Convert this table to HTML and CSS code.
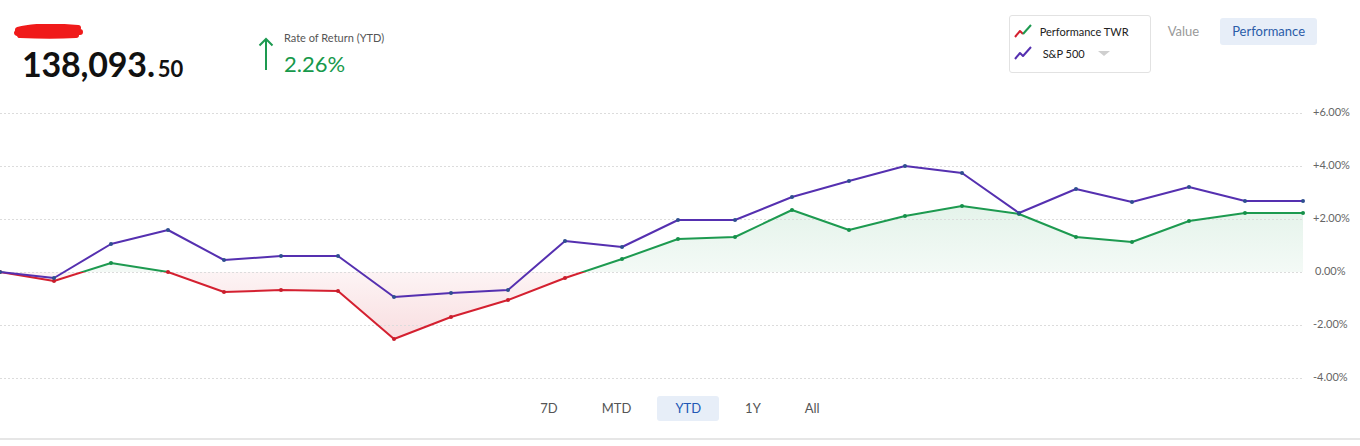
FILE: index.html
```html
<!DOCTYPE html>
<html>
<head>
<meta charset="utf-8">
<link rel="stylesheet" href="styles.css">
</head>
<body>
<div class="page">
  <div class="header">
    <div class="balance">
      <svg class="scribble" width="70" height="15" viewBox="0 0 70 15">
        <path d="M4,6 C18,2 42,2 64,4 M3,9 C20,7 46,8 66,8 M6,11 C26,12 46,12 62,11" fill="none" stroke="#f01a1a" stroke-width="6" stroke-linecap="round"/>
      </svg>
      <div class="amount"><span class="big">138,093.</span><span class="cents">50</span></div>
    </div>
    <div class="ror">
      <svg class="arrow" width="16" height="34" viewBox="0 0 16 34">
        <path d="M8,33 L8,2 M1.5,8.5 L8,2 L14.5,8.5" fill="none" stroke="#1d9a50" stroke-width="2"/>
      </svg>
      <div class="ror-text">
        <div class="ror-label">Rate of Return (YTD)</div>
        <div class="ror-value">2.26%</div>
      </div>
    </div>
    <div class="right">
      <div class="legend">
        <div class="legend-row">
          <svg class="legend-icon" width="18" height="14" viewBox="0 0 18 14">
            <polyline points="1,13 6,7 9,10" fill="none" stroke="#d42030" stroke-width="2" stroke-linejoin="round"/>
            <polyline points="9,10 17,1" fill="none" stroke="#1d9a50" stroke-width="2"/>
          </svg>
          <span class="legend-text">Performance TWR</span>
        </div>
        <div class="legend-row">
          <svg class="legend-icon" width="18" height="14" viewBox="0 0 18 14">
            <polyline points="1,13 6,7 9,10 17,1" fill="none" stroke="#5530b0" stroke-width="2" stroke-linejoin="round"/>
          </svg>
          <span class="legend-text sp">S&amp;P 500</span>
          <span class="caret"></span>
        </div>
      </div>
      <div class="toggle">
        <span class="tbtn">Value</span>
        <span class="tbtn active">Performance</span>
      </div>
    </div>
  </div>

  <svg class="chart" width="1360" height="295" viewBox="0 0 1360 295">
    <defs>
      <clipPath id="above"><rect x="0" y="0" width="1360" height="177"/></clipPath>
      <clipPath id="below"><rect x="0" y="177" width="1360" height="118"/></clipPath>
      <linearGradient id="gfill" gradientUnits="userSpaceOnUse" x1="0" y1="110" x2="0" y2="177">
        <stop offset="0" stop-color="#1d9a50" stop-opacity="0.12"/>
        <stop offset="1" stop-color="#1d9a50" stop-opacity="0.05"/>
      </linearGradient>
      <linearGradient id="rfill" gradientUnits="userSpaceOnUse" x1="0" y1="244" x2="0" y2="177">
        <stop offset="0" stop-color="#d42030" stop-opacity="0.15"/>
        <stop offset="1" stop-color="#d42030" stop-opacity="0.05"/>
      </linearGradient>
    </defs>

    <polygon clip-path="url(#above)" fill="url(#gfill)" points="0,177 54,186 111,168 168,177 224,197 281,195 338,196 394,244 451,222 508,205 565,183 622,164 678,144 735,142 792,115 849,135 905,121 962,111 1019,119 1076,142 1132,147 1189,126 1245,118 1303,118 1303,177"/>
    <polygon clip-path="url(#below)" fill="url(#rfill)" points="0,177 54,186 111,168 168,177 224,197 281,195 338,196 394,244 451,222 508,205 565,183 622,164 678,144 735,142 792,115 849,135 905,121 962,111 1019,119 1076,142 1132,147 1189,126 1245,118 1303,118 1303,177"/>

    <g class="grid">
      <line x1="0" y1="18.5" x2="1303" y2="18.5"/>
      <line x1="0" y1="71.5" x2="1303" y2="71.5"/>
      <line x1="0" y1="124.5" x2="1303" y2="124.5"/>
      <line x1="0" y1="177.5" x2="1303" y2="177.5"/>
      <line x1="0" y1="230.5" x2="1303" y2="230.5"/>
      <line x1="0" y1="283.5" x2="1303" y2="283.5"/>
    </g>

    <g class="axis">
      <text x="1313" y="18">+6.00%</text>
      <text x="1313" y="71">+4.00%</text>
      <text x="1313" y="124">+2.00%</text>
      <text x="1315" y="177">0.00%</text>
      <text x="1313" y="230">-2.00%</text>
      <text x="1313" y="283">-4.00%</text>
    </g>

    <polyline class="twr-g" clip-path="url(#above)" points="0,177 54,186 111,168 168,177 224,197 281,195 338,196 394,244 451,222 508,205 565,183 622,164 678,144 735,142 792,115 849,135 905,121 962,111 1019,119 1076,142 1132,147 1189,126 1245,118 1303,118"/>
    <polyline class="twr-r" clip-path="url(#below)" points="0,177 54,186 111,168 168,177 224,197 281,195 338,196 394,244 451,222 508,205 565,183 622,164 678,144 735,142 792,115 849,135 905,121 962,111 1019,119 1076,142 1132,147 1189,126 1245,118 1303,118"/>

    <g class="dots-r">
      <circle cx="0" cy="177" r="2"/><circle cx="54" cy="186" r="2"/><circle cx="168" cy="177" r="2"/>
      <circle cx="224" cy="197" r="2"/><circle cx="281" cy="195" r="2"/><circle cx="338" cy="196" r="2"/>
      <circle cx="394" cy="244" r="2"/><circle cx="451" cy="222" r="2"/><circle cx="508" cy="205" r="2"/>
      <circle cx="565" cy="183" r="2"/>
    </g>
    <g class="dots-g">
      <circle cx="111" cy="168" r="2"/><circle cx="622" cy="164" r="2"/><circle cx="678" cy="144" r="2"/>
      <circle cx="735" cy="142" r="2"/><circle cx="792" cy="115" r="2"/><circle cx="849" cy="135" r="2"/>
      <circle cx="905" cy="121" r="2"/><circle cx="962" cy="111" r="2"/><circle cx="1019" cy="119" r="2"/>
      <circle cx="1076" cy="142" r="2"/><circle cx="1132" cy="147" r="2"/><circle cx="1189" cy="126" r="2"/>
      <circle cx="1245" cy="118" r="2"/><circle cx="1303" cy="118" r="2"/>
    </g>

    <polyline class="sp-line" points="0,177 54,183 111,149 168,135 224,165 281,161 338,161 394,202 451,198 508,195 565,146 622,152 678,125 735,125 792,102 849,86 905,71 962,78 1019,118 1076,94 1132,107 1189,92 1245,106 1303,106"/>
    <g class="dots-p">
      <circle cx="0" cy="177" r="2"/><circle cx="54" cy="183" r="2"/><circle cx="111" cy="149" r="2"/>
      <circle cx="168" cy="135" r="2"/><circle cx="224" cy="165" r="2"/><circle cx="281" cy="161" r="2"/>
      <circle cx="338" cy="161" r="2"/><circle cx="394" cy="202" r="2"/><circle cx="451" cy="198" r="2"/>
      <circle cx="508" cy="195" r="2"/><circle cx="565" cy="146" r="2"/><circle cx="622" cy="152" r="2"/>
      <circle cx="678" cy="125" r="2"/><circle cx="735" cy="125" r="2"/><circle cx="792" cy="102" r="2"/>
      <circle cx="849" cy="86" r="2"/><circle cx="905" cy="71" r="2"/><circle cx="962" cy="78" r="2"/>
      <circle cx="1019" cy="118" r="2"/><circle cx="1076" cy="94" r="2"/><circle cx="1132" cy="107" r="2"/>
      <circle cx="1189" cy="92" r="2"/><circle cx="1245" cy="106" r="2"/><circle cx="1303" cy="106" r="2"/>
    </g>
  </svg>

  <div class="ranges">
    <span class="rbtn">7D</span>
    <span class="rbtn">MTD</span>
    <span class="rbtn active">YTD</span>
    <span class="rbtn">1Y</span>
    <span class="rbtn">All</span>
  </div>
  <div class="rule"></div>
</div>
</body>
</html>
```

FILE: styles.css
```css
* { box-sizing: border-box; }
html, body { margin: 0; padding: 0; background: #fff; }
body { font-family: Lato, "Open Sans", sans-serif; color: #333; }
.page { width: 1360px; height: 446px; overflow: hidden; }

.header { display: flex; align-items: flex-start; height: 95px; }

.balance { width: 258px; padding: 24px 0 0 14px; }
.scribble { display: block; }
.amount { margin: 8px 0 0 8px; line-height: 33px; color: #111; white-space: nowrap; }
.big { font-size: 34px; font-weight: 700; letter-spacing: -0.2px; }
.cents { font-size: 22px; font-weight: 700; margin-left: 3px; }

.ror { display: flex; align-items: flex-start; padding-top: 37px; }
.arrow { display: block; }
.ror-text { margin-left: 10px; margin-top: -6px; }
.ror-label { font-size: 11px; line-height: 14px; color: #555; }
.ror-value { font-size: 22px; line-height: 26px; margin-top: 6px; color: #17994b; font-weight: 400; }

.right { margin-left: auto; display: flex; align-items: flex-start; padding-top: 15px; padding-right: 43px; }
.legend { width: 142px; height: 58px; border: 1px solid #e2e2e2; border-radius: 3px; padding: 4px 4px; }
.legend-row { display: flex; align-items: center; height: 22px; }
.legend-icon { display: block; flex: none; }
.legend-text { font-size: 11px; color: #222; margin-left: 8px; }
.legend-text.sp { margin-left: 11px; }
.caret { width: 0; height: 0; border-left: 6px solid transparent; border-right: 6px solid transparent; border-top: 5px solid #cfcfcf; margin-left: 13px; margin-top: 1px; }

.toggle { display: flex; gap: 9px; margin-left: 5px; margin-top: 3px; }
.tbtn { font-size: 13px; line-height: 27px; height: 27px; padding: 0 12px; color: #999; border-radius: 3px; }
.tbtn.active { background: #e7eef8; color: #2b5ca8; }

.chart { display: block; }
.grid line { stroke: #dcdcdc; stroke-width: 1; stroke-dasharray: 2 2; }
.axis text { font-family: Lato, sans-serif; font-size: 11px; fill: #666; dominant-baseline: middle; }
.twr-g { fill: none; stroke: #1d9a50; stroke-width: 2; stroke-linejoin: round; }
.twr-r { fill: none; stroke: #d42030; stroke-width: 2; stroke-linejoin: round; }
.sp-line { fill: none; stroke: #5530b0; stroke-width: 2; stroke-linejoin: round; }
.dots-r circle { fill: #c81e2c; }
.dots-g circle { fill: #15904a; }
.dots-p circle { fill: #2e4f8f; }

.ranges { display: flex; justify-content: center; gap: 8px; margin-top: 6px; }
.rbtn { font-size: 13px; line-height: 25px; height: 25px; padding: 0 18px; color: #555; border-radius: 3px; }
.rbtn.active { background: #e7eef8; color: #2257b5; }

.rule { height: 2px; background: #e6e6e6; margin-top: 17px; }
```
